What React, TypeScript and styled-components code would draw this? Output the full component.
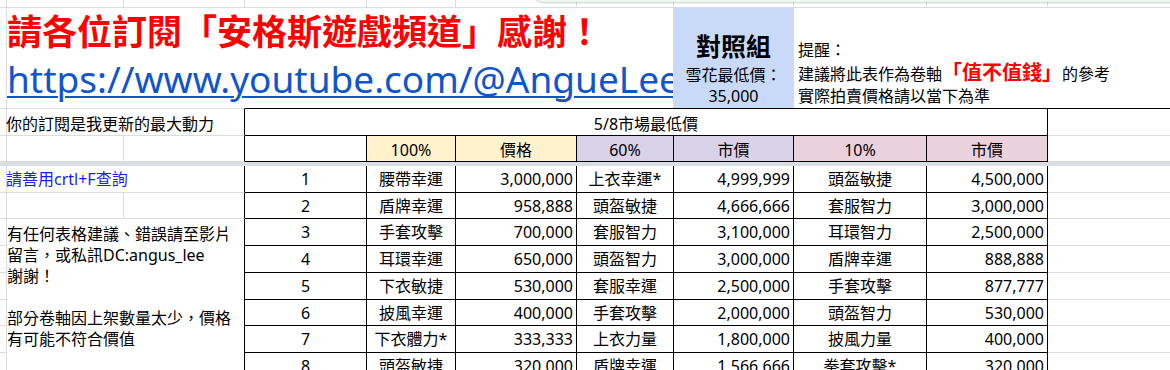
import styled, { createGlobalStyle } from "styled-components";

const GRID = "#dcdcdc";
const INK = "#000";
const COLS = "3px 121px 121px 122px 89px 121px 97px 120px 133px 121px 1fr";

type Edge = "grid" | "ink" | "none";

const edge = (e: Edge) => (e === "none" ? "none" : `1px solid ${e === "ink" ? INK : GRID}`);

const GlobalStyle = createGlobalStyle`
    html, body {
        margin: 0;
        padding: 0;
        background: #fff;
    }
    body {
        font-family: "Noto Sans", "Noto Sans CJK TC", sans-serif;
        color: #000;
        overflow: hidden;
    }
    * {
        box-sizing: border-box;
    }
`;

const Sheet = styled.div`
    position: relative;
    width: 1170px;
    height: 370px;
    overflow: hidden;
    background: #fff;
`;

const FloatShade = styled.div`
    position: absolute;
    top: -38px;
    left: 533px;
    right: -20px;
    height: 40px;
    background: #eef6ef;
    border-radius: 0 0 0 10px;
    box-shadow: 0 1px 2px rgba(60, 64, 67, 0.25);
`;

const HeadGrid = styled.div`
    display: grid;
    grid-template-columns: ${COLS};
    grid-template-rows: 8px 100px 28px 26px;
`;

const BodyGrid = styled.div`
    display: grid;
    grid-template-columns: ${COLS};
    grid-template-rows: 27px 26px 27px 27px 27px 26px 27px 27px;
`;

const FreezeBar = styled.div`
    height: 4px;
    background: #dadde2;
`;

interface CellProps {
    $r?: Edge;
    $b?: Edge;
    $t?: Edge;
    $bg?: string;
    $align?: "left" | "center" | "right";
    $v?: "center" | "bottom";
    $span?: number;
    $color?: string;
}

const Cell = styled.div<CellProps>`
    grid-column: ${({ $span }) => ($span ? `span ${$span}` : "auto")};
    border-right: ${({ $r }) => edge($r ?? "grid")};
    border-bottom: ${({ $b }) => edge($b ?? "grid")};
    border-top: ${({ $t }) => ($t ? edge($t) : "none")};
    background: ${({ $bg }) => $bg ?? "transparent"};
    color: ${({ $color }) => $color ?? "#000"};
    display: flex;
    align-items: ${({ $v }) => ($v === "bottom" ? "flex-end" : "center")};
    justify-content: ${({ $align }) =>
        $align === "right" ? "flex-end" : $align === "left" ? "flex-start" : "center"};
    padding: ${({ $v }) => ($v === "bottom" ? "0 3px 1px" : "0 3px")};
    font-size: 16px;
    line-height: 20px;
    white-space: nowrap;
    overflow: hidden;
    min-width: 0;
`;

const TitleCell = styled.div`
    grid-column: 2 / 8;
    display: flex;
    flex-direction: column;
    align-items: flex-start;
    padding: 0 0 0 4px;
    border-right: 1px solid ${GRID};
    min-width: 0;
    white-space: nowrap;
`;

const Headline = styled.div`
    font-family: "Noto Sans CJK TC", sans-serif;
    font-weight: 700;
    font-size: 35px;
    line-height: 44px;
    color: #ff0000;
`;

const LinkRow = styled.div`
    align-self: stretch;
    overflow: hidden;
    margin-top: 2px;
    height: 54px;
`;

const ChannelLink = styled.a`
    font-family: "Noto Sans", sans-serif;
    font-size: 37px;
    line-height: 50px;
    color: #1155cc;
    text-decoration: underline;
    text-underline-offset: 3px;
    text-decoration-thickness: 2px;
`;

const ControlCell = styled.div`
    background: #c9daf8;
    border-right: 1px solid ${GRID};
    display: flex;
    flex-direction: column;
    align-items: center;
    justify-content: flex-end;
    padding-bottom: 2px;
`;

const ControlTitle = styled.div`
    font-family: "Noto Sans CJK TC", sans-serif;
    font-weight: 700;
    font-size: 25px;
    line-height: 30px;
    margin-bottom: 4px;
`;

const ControlLine = styled.div<{ $h: number }>`
    font-size: 16px;
    line-height: ${({ $h }) => $h}px;
`;

const NoteCell = styled.div`
    grid-column: 9 / 12;
    display: flex;
    flex-direction: column;
    justify-content: flex-end;
    padding: 0 4px 0 4px;
    font-size: 16px;
    white-space: nowrap;
`;

const NoteLine = styled.div`
    height: 23px;
    line-height: 23px;
`;

const Warn = styled.span`
    font-family: "Noto Sans CJK TC", sans-serif;
    color: #ff0000;
    font-weight: 700;
    font-size: 20px;
    line-height: 1;
`;

const MemoCell = styled.div`
    grid-column: 2 / 4;
    grid-row: 3 / 9;
    border-right: 1px solid ${INK};
    padding: 5px 4px 0;
    font-size: 16px;
    line-height: 21px;
    white-space: pre-line;
`;

const DATA: string[][] = [
    ["腰帶幸運", "3,000,000", "上衣幸運*", "4,999,999", "頭盔敏捷", "4,500,000"],
    ["盾牌幸運", "958,888", "頭盔敏捷", "4,666,666", "套服智力", "3,000,000"],
    ["手套攻擊", "700,000", "套服智力", "3,100,000", "耳環智力", "2,500,000"],
    ["耳環幸運", "650,000", "頭盔智力", "3,000,000", "盾牌幸運", "888,888"],
    ["下衣敏捷", "530,000", "套服幸運", "2,500,000", "手套攻擊", "877,777"],
    ["披風幸運", "400,000", "手套攻擊", "2,000,000", "頭盔智力", "530,000"],
    ["下衣體力*", "333,333", "上衣力量", "1,800,000", "披風力量", "400,000"],
    ["頭盔敏捷", "320,000", "盾牌幸運", "1,566,666", "拳套攻擊*", "320,000"],
];

const HEADS: { label: string; bg: string }[] = [
    { label: "100%", bg: "#fff2cc" },
    { label: "價格", bg: "#fff2cc" },
    { label: "60%", bg: "#d9d2e9" },
    { label: "市價", bg: "#d9d2e9" },
    { label: "10%", bg: "#ead1dc" },
    { label: "市價", bg: "#ead1dc" },
];

const MEMO = "有任何表格建議、錯誤請至影片\n留言，或私訊DC:angus_lee\n謝謝！\n\n部分卷軸因上架數量太少，價格\n有可能不符合價值";

const Header = () => (
    <HeadGrid>
        {Array.from({ length: 11 }).map((_, i) => (
            <Cell key={`top${i}`} $r={i === 10 ? "none" : "grid"} />
        ))}

        <Cell $b="none" />
        <TitleCell>
            <Headline>請各位訂閱「安格斯遊戲頻道」感謝！</Headline>
            <LinkRow>
                <ChannelLink href="#">https://www.youtube.com/@AngueLee</ChannelLink>
            </LinkRow>
        </TitleCell>
        <ControlCell>
            <ControlTitle>對照組</ControlTitle>
            <ControlLine $h={22}>雪花最低價：</ControlLine>
            <ControlLine $h={20}>35,000</ControlLine>
        </ControlCell>
        <NoteCell>
            <NoteLine>提醒：</NoteLine>
            <NoteLine>
                建議將此表作為卷軸<Warn>「值不值錢」</Warn>的參考
            </NoteLine>
            <NoteLine>實際拍賣價格請以當下為準</NoteLine>
        </NoteCell>

        <Cell $t="grid" />
        <Cell $t="grid" $span={2} $r="ink" $align="left" $v="bottom">
            你的訂閱是我更新的最大動力
        </Cell>
        <Cell $t="ink" $span={7} $r="ink" $b="ink" $v="bottom">
            5/8市場最低價
        </Cell>
        <Cell $t="ink" $r="none" />

        <Cell />
        <Cell />
        <Cell $r="ink" />
        <Cell $r="ink" $b="ink" />
        {HEADS.map((h, i) => (
            <Cell key={`h${i}`} $bg={h.bg} $r="ink" $b="ink" $v="bottom">
                {h.label}
            </Cell>
        ))}
        <Cell $r="none" />
    </HeadGrid>
);

const Body = () => (
    <BodyGrid>
        <MemoCell>{MEMO}</MemoCell>
        {DATA.map((row, r) => (
            <>
                <Cell key={`s${r}`} />
                {r === 0 && (
                    <Cell $span={2} $r="ink" $align="left" $color="#1a1aff">
                        請善用crtl+F查詢
                    </Cell>
                )}
                {r === 1 && (
                    <>
                        <Cell />
                        <Cell $r="ink" />
                    </>
                )}
                <Cell $r="ink" $b="ink">
                    {r + 1}
                </Cell>
                {row.map((v, c) => (
                    <Cell key={`d${r}-${c}`} $r="ink" $b="ink" $align={c % 2 ? "right" : "center"}>
                        {v}
                    </Cell>
                ))}
                <Cell $r="none" />
            </>
        ))}
    </BodyGrid>
);

export default function App() {
    return (
        <>
            <GlobalStyle />
            <Sheet>
                <Header />
                <FreezeBar />
                <Body />
                <FloatShade />
            </Sheet>
        </>
    );
}
